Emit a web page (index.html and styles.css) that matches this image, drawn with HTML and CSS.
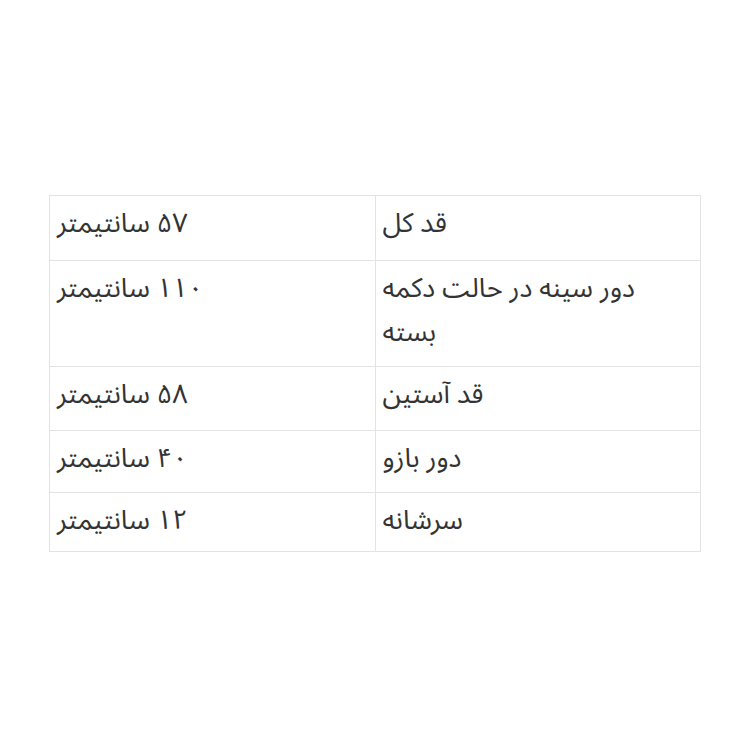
FILE: index.html
```html
<!DOCTYPE html>
<html lang="fa" dir="rtl">
<head>
<meta charset="utf-8">
<title>جدول سایز</title>
<link rel="stylesheet" href="styles.css">
</head>
<body>
<div class="page">
  <table class="size-table">
    <tbody>
      <tr class="r1"><td class="label">قد کل</td><td class="value"><span class="num">۵۷</span> سانتیمتر</td></tr>
      <tr class="r2"><td class="label">دور سینه در حالت دکمه بسته</td><td class="value"><span class="num">۱۱۰</span> سانتیمتر</td></tr>
      <tr class="r3"><td class="label">قد آستین</td><td class="value"><span class="num">۵۸</span> سانتیمتر</td></tr>
      <tr class="r4"><td class="label">دور بازو</td><td class="value"><span class="num">۴۰</span> سانتیمتر</td></tr>
      <tr class="r5"><td class="label">سرشانه</td><td class="value"><span class="num">۱۲</span> سانتیمتر</td></tr>
    </tbody>
  </table>
</div>
</body>
</html>
```

FILE: styles.css
```css
html, body {
  margin: 0;
  padding: 0;
  background: #ffffff;
}
.page {
  width: 750px;
  height: 750px;
  padding: 195px 0 0 49px;
  box-sizing: border-box;
  direction: ltr;
}
.size-table {
  direction: rtl;
  border-collapse: collapse;
  width: 652px;
  table-layout: fixed;
  font-family: "Noto Sans Arabic", "DejaVu Sans", sans-serif;
  font-size: 27px;
  color: #333333;
}
.size-table td {
  border: 1px solid #e3e3e3;
  text-align: left;
  vertical-align: top;
  padding: 6px 7px 6px 7px;
  line-height: 44px;
  width: 50%;
  box-sizing: border-box;
}
.num {
  letter-spacing: -3px;
}
.r1 td { height: 65px; }
.r2 td { height: 106px; }
.r3 td { height: 64px; }
.r4 td { height: 62px; }
.r5 td { height: 59px; }
```
